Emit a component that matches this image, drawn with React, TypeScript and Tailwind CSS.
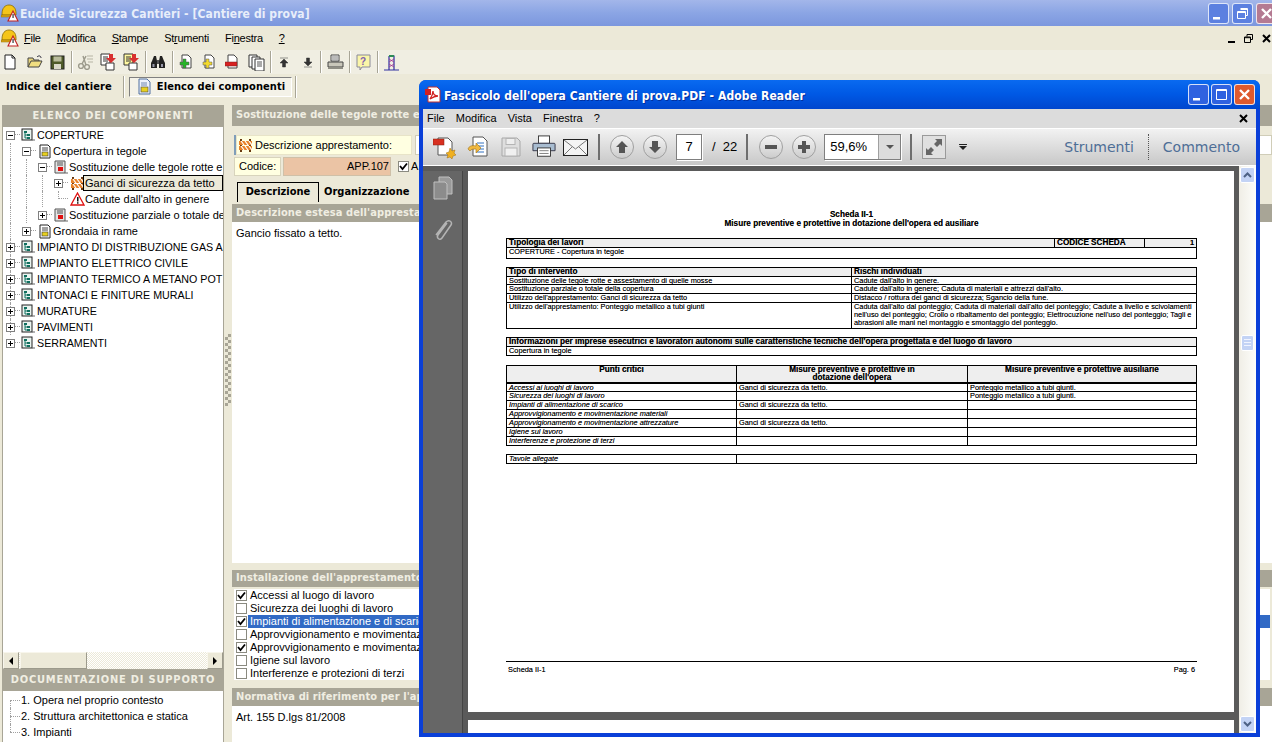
import React from 'react';

const UI = "font-['Liberation_Sans',Arial,sans-serif]";
const HEAD = "font-['DejaVu_Sans_Condensed','DejaVu_Sans',sans-serif]";

function Box({ w, h, children, className = '' }: { w: number; h: number; children: React.ReactNode; className?: string }) {
  return (
    <svg width={w} height={h} viewBox={`0 0 ${w} ${h}`} className={`block shrink-0 ${className}`}>
      {children}
    </svg>
  );
}

function HelmetIcon() {
  return (
    <Box w={18} h={18}>
      <path d="M1 10C1 4 4 1 8 1s7 3 7 8v2H1z" fill="#F5C518" stroke="#8A6A00" strokeWidth="0.8" />
      <path d="M0 11h10v2H0z" fill="#E0A810" stroke="#8A6A00" strokeWidth="0.5" />
      <path d="M12 7l5 10H7z" fill="#fff" stroke="#C02020" strokeWidth="1.100" />
      <rect x="11.500" y="10" width="1.100" height="4" fill="#222" />
    </Box>
  );
}

function DocIcon({ fill = '#fff', stroke = '#222' }: { fill?: string; stroke?: string }) {
  return (
    <Box w={16} h={18}>
      <path d="M3 2h7l3 3v11H3z" fill={fill} stroke={stroke} strokeWidth="1" />
      <path d="M10 2v3h3" fill="none" stroke={stroke} />
    </Box>
  );
}

function ListDocIcon() {
  return (
    <Box w={16} h={18}>
      <path d="M2 1h8l3 3v12H2z" fill="#EDF1FA" stroke="#5070A0" />
      <path d="M4 5h6M4 7h6" stroke="#7088B0" />
      <rect x="4" y="9" width="7" height="5" fill="#E8D020" stroke="#444" strokeWidth="0.6" />
    </Box>
  );
}

function OpenIcon() {
  return (
    <Box w={16} h={16}>
      <path d="M1 13V4h5l1 2h5v2" fill="#E6D47C" stroke="#444" />
      <path d="M1 13l3-6h11l-3 6z" fill="#F0DE80" stroke="#444" />
      <path d="M10 3c2-2 4-1 4 1" fill="none" stroke="#223" />
    </Box>
  );
}

function SaveIcon() {
  return (
    <Box w={15} h={15}>
      <rect x="1" y="1" width="13" height="13" fill="#4E5A28" stroke="#222" />
      <rect x="3.500" y="1.500" width="8" height="5" fill="#B9BC9C" />
      <rect x="4" y="9" width="7" height="5" fill="#D9D8C8" />
    </Box>
  );
}

function CutIcon() {
  return (
    <Box w={17} h={16}>
      <circle cx="4" cy="12" r="2.400" fill="none" stroke="#9C9A8C" strokeWidth="1.400" />
      <circle cx="10" cy="13" r="2.400" fill="none" stroke="#9C9A8C" strokeWidth="1.400" />
      <path d="M5 10l4-8M9 11L6 2" stroke="#9C9A8C" strokeWidth="1.400" />
      <path d="M10 2h6M10 5h6M11 8h5" stroke="#B5B3A4" strokeWidth="1.200" />
    </Box>
  );
}

function CopyDownIcon({ fill }: { fill: string }) {
  return (
    <Box w={17} h={18}>
      <path d="M1 1h9v11H1z" fill={fill} stroke="#333" />
      <path d="M3 4h5M3 6h5M3 8h5" stroke="#333" />
      <path d="M6 10h8v7H6z" fill="#fff" stroke="#333" />
      <path d="M9 1h4v4h3l-5 5-5-5h3z" fill="#D83030" />
    </Box>
  );
}

function BinocularsIcon() {
  return (
    <Box w={16} h={15}>
      <path d="M2 6l2-5h2l1 5v7H1V8zM14 6l-2-5h-2L9 6v7h6V8z" fill="#222" />
      <rect x="7" y="5" width="2" height="4" fill="#555" />
      <rect x="2.500" y="9" width="2" height="3" fill="#99A" />
      <rect x="11" y="9" width="2" height="3" fill="#99A" />
    </Box>
  );
}

function SheetActionIcon({ kind }: { kind: 'add' | 'edit' | 'del' }) {
  const color = kind === 'add' ? '#27B427' : kind === 'edit' ? '#F2D92E' : '#D82020';
  return (
    <Box w={14} h={16}>
      <path d="M3 1h6l3 3v10H3z" fill="#fff" stroke="#444" />
      {kind === 'del' ? (
        <rect x="0" y="8" width="12" height="4" fill={color} stroke="#722" strokeWidth="0.5" />
      ) : (
        <path d="M4 5h3v3h3v3H7v3H4v-3H1V8h3z" fill={color} stroke="#555" strokeWidth="0.5" />
      )}
    </Box>
  );
}

function PagesIcon() {
  return (
    <Box w={17} h={17}>
      <path d="M1 1h8v12H1z" fill="#fff" stroke="#333" />
      <path d="M4 3h8v12H4z" fill="#fff" stroke="#333" />
      <path d="M7 5h9v12H7z" fill="#fff" stroke="#333" />
      <path d="M9 8h5M9 10h5M9 12h5" stroke="#555" />
    </Box>
  );
}

function ArrowBarIcon({ down = false }: { down?: boolean }) {
  return (
    <Box w={10} h={11}>
      {down ? (
        <path d="M3.500 1h3v4h2.500L5 9 1 5h2.500zM1 10h8" fill="#333" stroke="#333" strokeWidth="0.5" />
      ) : (
        <path d="M1 1h8M5 2l4 4H6.500v4h-3V6H1z" fill="#333" stroke="#333" strokeWidth="0.5" />
      )}
    </Box>
  );
}

function PrintIcon() {
  return (
    <Box w={17} h={16}>
      <path d="M4 1h8v6H4z" fill="#fff" stroke="#444" />
      <path d="M5 3h6M5 5h6" stroke="#777" />
      <path d="M1 8h15v5H1z" fill="#C9C7BA" stroke="#444" />
      <rect x="1" y="13" width="15" height="2" fill="#8F8E84" />
    </Box>
  );
}

function HelpIcon() {
  return (
    <Box w={15} h={17}>
      <path d="M1 1h13v12H6l-2 3v-3H1z" fill="#FBF6A8" stroke="#8A8A9A" />
      <text x="4" y="11" fontSize="10" fontWeight="700" fontFamily="Liberation Sans" fill="#8060B0">?</text>
    </Box>
  );
}

function TowerIcon() {
  return (
    <Box w={15} h={17}>
      <path d="M5 2h5v14M5 2v14" stroke="#3030A0" strokeWidth="1.200" fill="none" />
      <path d="M5 5l5 3M10 5L5 8M5 10l5 3M10 10l-5 3" stroke="#A03090" strokeWidth="0.8" />
      <rect x="5" y="1" width="5" height="2" fill="#2E8B57" />
      <path d="M0 16h15" stroke="#3030A0" />
    </Box>
  );
}

function TreeRootIcon() {
  return (
    <Box w={16} h={14}>
      <rect x="1" y="1" width="10" height="11" fill="#EAF4F0" stroke="#222" />
      <path d="M3 3h3v2H3zM6 6h3v2H6zM6 9h3v2H6z" fill="#107060" />
      <path d="M4 5v5h2M4 7h2" stroke="#107060" fill="none" />
      <path d="M11 12l3 0" stroke="#666" />
    </Box>
  );
}

function TreeDocIcon() {
  return (
    <Box w={15} h={15}>
      <path d="M2 1h8l2 2v11H2z" fill="#fff" stroke="#222" />
      <path d="M4 4h6M4 6h6" stroke="#444" />
      <rect x="4" y="8" width="6" height="4" fill="#E8D020" stroke="#333" strokeWidth="0.6" />
    </Box>
  );
}

function TreeRedDocIcon() {
  return (
    <Box w={15} h={15}>
      <path d="M1 1h10v12H1z" fill="#E4E4E4" stroke="#555" />
      <path d="M3 3h6M3 5h6" stroke="#555" />
      <rect x="4" y="7" width="5" height="4" fill="#E01010" />
      <path d="M11 13h3" stroke="#666" />
    </Box>
  );
}

function BarrierIcon() {
  return (
    <svg width="13" height="13" viewBox="0 0 13 13" className="block shrink-0">
      <rect x="1" y="0" width="2" height="13" fill="#6B3A10" />
      <rect x="10" y="0" width="2" height="13" fill="#6B3A10" />
      <rect x="0" y="2" width="13" height="4" fill="#E8822A" />
      <rect x="0" y="7" width="13" height="4" fill="#E8822A" />
      <path d="M2 2l3 4M6 2l3 4M10 2l3 4M2 7l3 4M6 7l3 4M10 7l3 4" stroke="#fff" strokeWidth="1.200" />
    </svg>
  );
}

function WarnIcon() {
  return (
    <Box w={15} h={14}>
      <path d="M7.500 1L14 13H1z" fill="#fff" stroke="#E01010" strokeWidth="1.300" />
      <rect x="7" y="5" width="1.500" height="4.500" fill="#111" />
      <rect x="7" y="10.200" width="1.500" height="1.500" fill="#111" />
    </Box>
  );
}

function Expander({ sign }: { sign: '+' | '-' }) {
  return (
    <span className="relative z-10 -ml-[1px] flex h-[9px] w-[9px] items-center justify-center border border-[#808080] bg-white">
      <span className="h-px w-[5px] bg-black" />
      {sign === '+' && <span className="absolute h-[5px] w-px bg-black" />}
    </span>
  );
}

type TreeRow = {
  level: number;
  exp?: '+' | '-';
  icon: React.ReactNode;
  label: string;
  guides: number[];
  stub?: boolean;
  selected?: boolean;
};

const rows: TreeRow[] = [
  { level: 0, exp: '-', icon: <TreeRootIcon />, label: 'COPERTURE', guides: [] },
  { level: 1, exp: '-', icon: <TreeDocIcon />, label: 'Copertura in tegole', guides: [0] },
  { level: 2, exp: '-', icon: <TreeRedDocIcon />, label: 'Sostituzione delle tegole rotte e assestamento', guides: [0, 1] },
  { level: 3, exp: '+', icon: <BarrierIcon />, label: 'Ganci di sicurezza da tetto', guides: [0, 1, 2], selected: true },
  { level: 3, stub: true, icon: <WarnIcon />, label: "Cadute dall'alto in genere", guides: [0, 1, 2] },
  { level: 2, exp: '+', icon: <TreeRedDocIcon />, label: 'Sostituzione parziale o totale della copertura', guides: [0, 1] },
  { level: 1, exp: '+', icon: <TreeDocIcon />, label: 'Grondaia in rame', guides: [0] },
  { level: 0, exp: '+', icon: <TreeRootIcon />, label: 'IMPIANTO DI DISTRIBUZIONE GAS A', guides: [0] },
  { level: 0, exp: '+', icon: <TreeRootIcon />, label: 'IMPIANTO ELETTRICO CIVILE', guides: [0] },
  { level: 0, exp: '+', icon: <TreeRootIcon />, label: 'IMPIANTO TERMICO A METANO POT', guides: [0] },
  { level: 0, exp: '+', icon: <TreeRootIcon />, label: 'INTONACI E FINITURE MURALI', guides: [0] },
  { level: 0, exp: '+', icon: <TreeRootIcon />, label: 'MURATURE', guides: [0] },
  { level: 0, exp: '+', icon: <TreeRootIcon />, label: 'PAVIMENTI', guides: [0] },
  { level: 0, exp: '+', icon: <TreeRootIcon />, label: 'SERRAMENTI', guides: [] },
];

function Tree() {
  return (
    <div className="flex min-h-0 flex-1 flex-col overflow-hidden border-x border-[#A8A596] bg-white">
      {rows.map((r) => (
        <div key={r.label} className={`flex h-4 shrink-0 items-center overflow-hidden whitespace-nowrap text-black ${r.level === 0 ? 'text-[10.700px]' : 'text-[11px]'}`}>
          {Array.from({ length: r.level }).map((_, i) => (
            <span key={i} className="relative block h-4 w-4 shrink-0">
              {r.guides.includes(i) && <span className="absolute inset-y-0 left-[7px] border-l border-dotted border-[#A0A0A0]" />}
            </span>
          ))}
          <span className="relative flex h-4 w-4 shrink-0 items-center justify-center">
            <span className="absolute left-[8px] top-[7px] w-[9px] border-t border-dotted border-[#A0A0A0]" />
            {r.guides.includes(r.level) && <span className="absolute inset-y-0 left-[7px] border-l border-dotted border-[#A0A0A0]" />}
            {r.stub && <span className="absolute left-[7px] top-0 h-2 border-l border-dotted border-[#A0A0A0]" />}
            {r.exp && <Expander sign={r.exp} />}
          </span>
          <span className="ml-[2px] flex w-4 shrink-0 justify-center">{r.icon}</span>
          <span className={r.selected ? '-ml-[2px] flex h-4 flex-1 items-center border border-black bg-[#ECE9D8] pl-[1px]' : ''}>{r.label}</span>
        </div>
      ))}
    </div>
  );
}

function HBar() {
  return (
    <div className="flex h-[17px] shrink-0 border-x border-[#A8A596] bg-[repeating-conic-gradient(#ffffff_0_25%,#ECE9D8_0_50%)] bg-[length:2px_2px]">
      <div className="flex w-[16px] items-center justify-center border border-[#F8F6EC] border-b-[#9C9A8C] border-r-[#9C9A8C] bg-[#ECE9D8]">
        <span className="h-0 w-0 border-y-[4px] border-r-[4px] border-y-transparent border-r-black" />
      </div>
      <div className="ml-[1px] w-[67px] border border-[#F8F6EC] border-b-[#9C9A8C] border-r-[#9C9A8C] bg-[#ECE9D8]" />
      <div className="flex-1" />
      <div className="flex w-[16px] items-center justify-center border border-[#F8F6EC] border-b-[#9C9A8C] border-r-[#9C9A8C] bg-[#ECE9D8]">
        <span className="h-0 w-0 border-y-[4px] border-l-[4px] border-y-transparent border-l-black" />
      </div>
    </div>
  );
}

function PanelHead({ children, h, center = false }: { children: React.ReactNode; h: number; center?: boolean }) {
  return (
    <div
      style={{ height: h }}
      className={`flex shrink-0 items-center overflow-hidden whitespace-nowrap bg-[#A8A596] text-[11px] font-bold text-[#F0EEE2] ${HEAD} ${center ? 'justify-center tracking-[0.8px]' : 'pl-1 tracking-[0.1px]'}`}
    >
      {children}
    </div>
  );
}

const checks = [
  { label: 'Accessi al luogo di lavoro', on: true },
  { label: 'Sicurezza dei luoghi di lavoro', on: false },
  { label: 'Impianti di alimentazione e di scarico', on: true, sel: true },
  { label: 'Approvvigionamento e movimentazione materiali', on: false },
  { label: 'Approvvigionamento e movimentazione attrezzature', on: true },
  { label: 'Igiene sul lavoro', on: false },
  { label: 'Interferenze e protezioni di terzi', on: false },
];

function Check({ on }: { on: boolean }) {
  return (
    <span className="flex h-[11px] w-[11px] shrink-0 items-center justify-center border border-[#8A8A80] bg-white">
      {on && (
        <svg width="9" height="9" viewBox="0 0 9 9" className="block">
          <path d="M1 4l2.500 3L8 1.500" fill="none" stroke="#000" strokeWidth="1.800" />
        </svg>
      )}
    </span>
  );
}

function RightPanel() {
  return (
    <div className="flex min-w-0 flex-1 flex-col text-[11px] text-black">
      <PanelHead h={21}>Sostituzione delle tegole rotte e assestamento di quelle mosse</PanelHead>
      <div className="mt-[9px] flex h-[20px] shrink-0 gap-[3px] pl-[2px]">
        <div className="flex w-[178px] items-center gap-[3px] border-l-2 border-l-[#7F9DB9] bg-[#FFFFE1] pl-[3px] shadow-[inset_0_0_0_1px_#E8E4C8]">
          <BarrierIcon />
          <span>Descrizione apprestamento:</span>
        </div>
        <div className="flex-1 border border-[#D0CDB8] bg-white" />
      </div>
      <div className="mt-[1px] flex h-[20px] shrink-0 items-center pl-[2px]">
        <div className="flex h-[19px] w-[47px] items-center border border-[#D8D4BC] bg-[#FFFFE1] pl-1">Codice:</div>
        <div className="ml-[2px] flex h-[19px] w-[108px] items-center justify-end border border-[#CFC0A8] bg-[#EBC4A5] pr-[1px]">APP.107</div>
        <span className="ml-[7px] flex"><Check on /></span>
        <span className="ml-[2px]">A carico dell&apos;impresa</span>
      </div>
      <div className={`mt-[6px] flex h-[20px] shrink-0 items-end pl-[5px] text-[11px] font-bold ${HEAD}`}>
        <div className="flex h-[20px] w-[82px] items-center justify-center border border-b-0 border-black bg-[#ECE9D8]">Descrizione</div>
        <div className="flex h-[20px] items-center px-[5px]">Organizzazione</div>
      </div>
      <div className="h-[2px] shrink-0" />
      <PanelHead h={18}>Descrizione estesa dell&apos;apprestamento</PanelHead>
      <div className="min-h-0 flex-1 bg-white px-1 pt-[3px]">Gancio fissato a tetto.</div>
      <div className="h-[7px] shrink-0" />
      <PanelHead h={17}>Installazione dell&apos;apprestamento</PanelHead>
      <div className="shrink-0 border-2 border-[#ECE9D8] bg-white">
        {checks.map((c) => (
          <div key={c.label} className="flex h-[13px] items-center">
            <span className="flex w-[14px] justify-center"><Check on={c.on} /></span>
            <span className={`flex h-[13px] flex-1 items-center whitespace-nowrap pl-[2px] ${c.sel ? 'bg-[#316AC5] text-white' : ''}`}>{c.label}</span>
          </div>
        ))}
      </div>
      <div className="h-[6px] shrink-0" />
      <PanelHead h={18}>Normativa di riferimento per l&apos;apprestamento</PanelHead>
      <div className="h-[36px] shrink-0 bg-white px-1 pt-[3px]">Art. 155 D.lgs 81/2008</div>
    </div>
  );
}

function TitleBtn({ kind, faded = false }: { kind: 'min' | 'max' | 'restore' | 'close'; faded?: boolean }) {
  const bg = kind === 'close'
    ? faded ? 'bg-[#B47A92]' : 'bg-[#DE5A2E]'
    : faded ? 'bg-[#5C80E0]' : 'bg-[#2F62E0]';
  return (
    <span className={`flex h-[21px] w-[21px] shrink-0 items-center justify-center rounded-[3px] border border-white/80 ${bg}`}>
      <svg width="15" height="15" viewBox="0 0 15 15" fill="none" stroke="#fff" className="block">
        {kind === 'min' && <rect x="2" y="11" width="7" height="2.500" fill="#fff" stroke="none" />}
        {kind === 'max' && <path d="M2.500 2.500h10v10h-10zM2.500 3.500h10" />}
        {kind === 'restore' && <path d="M5.500 2.500h7v7h-2M5.500 3.500h7M2.500 5.500h8v7h-8zM2.500 6.500h8" />}
        {kind === 'close' && <path d="M3 3l9 9M12 3l-9 9" strokeWidth="2.400" />}
      </svg>
    </span>
  );
}

function Sep({ className = '' }: { className?: string }) {
  return <span className={`block h-[22px] w-[2px] shrink-0 border-l border-r border-l-[#A8A596] border-r-white ${className}`} />;
}

function Slot({ ml, children }: { ml: string; children: React.ReactNode }) {
  return <span className={`block shrink-0 ${ml}`}>{children}</span>;
}

function MainApp() {
  return (
    <div className="flex h-full flex-col">
      {/* title bar */}
      <div className="flex h-[26px] shrink-0 items-center bg-gradient-to-b from-[#A3B6EA] via-[#8BA5E4] to-[#7C97DE] pl-[1px] text-[#E8EEFA]">
        <HelmetIcon />
        <span className={`ml-[1px] mt-[1px] whitespace-nowrap text-[12px] font-bold tracking-[0.1px] ${HEAD}`}>Euclide Sicurezza Cantieri - [Cantiere di prova]</span>
        <span className="-mr-[5px] ml-auto flex gap-[3px]">
          <TitleBtn kind="min" faded />
          <TitleBtn kind="restore" faded />
          <TitleBtn kind="close" faded />
        </span>
      </div>
      {/* menu */}
      <div className="flex h-[24px] shrink-0 items-center pl-[1px] text-[11px] tracking-[-0.25px] text-black">
        <HelmetIcon />
        <span className="ml-[5px]"><u>F</u>ile</span>
        <span className="ml-[16px]"><u>M</u>odifica</span>
        <span className="ml-[16px]"><u>S</u>tampe</span>
        <span className="ml-[16px]">St<u>r</u>umenti</span>
        <span className="ml-[16px]">Fi<u>n</u>estra</span>
        <span className="ml-[16px]"><u>?</u></span>
        <span className="ml-auto flex items-center gap-[9px] pr-[1px]">
          <span className="mt-[7px] block h-[2px] w-[7px] bg-black" />
          <svg width="9" height="9" viewBox="0 0 9 9" fill="none" stroke="#000" className="block"><path d="M3 2.500V.5h5.500v5H6.500M.5 3h6v5.500h-6zM.5 3.700h6" /></svg>
          <svg width="9" height="9" viewBox="0 0 9 9" fill="none" stroke="#000" strokeWidth="2" className="block"><path d="M1 1l7 7M8 1L1 8" /></svg>
        </span>
      </div>
      {/* toolbar */}
      <div className="flex h-[24px] shrink-0 items-center bg-[#F0EEE2] pl-[2px]">
        <DocIcon />
        <Slot ml="ml-[9px]"><OpenIcon /></Slot>
        <Slot ml="ml-[7px]"><SaveIcon /></Slot>
        <Sep className="ml-[6px]" />
        <Slot ml="ml-[4px]"><CutIcon /></Slot>
        <Slot ml="ml-[6px]"><CopyDownIcon fill="#fff" /></Slot>
        <Slot ml="ml-[6px]"><CopyDownIcon fill="#FFF8A0" /></Slot>
        <Sep className="ml-[5px]" />
        <Slot ml="ml-[3px]"><BinocularsIcon /></Slot>
        <Sep className="ml-[6px]" />
        <Slot ml="ml-[5px]"><SheetActionIcon kind="add" /></Slot>
        <Slot ml="ml-[9px]"><SheetActionIcon kind="edit" /></Slot>
        <Slot ml="ml-[9px]"><SheetActionIcon kind="del" /></Slot>
        <Slot ml="ml-[9px]"><PagesIcon /></Slot>
        <Sep className="ml-[5px]" />
        <Slot ml="ml-[7px]"><ArrowBarIcon /></Slot>
        <Slot ml="ml-[14px]"><ArrowBarIcon down /></Slot>
        <Sep className="ml-[7px]" />
        <Slot ml="ml-[5px]"><PrintIcon /></Slot>
        <Sep className="ml-[5px]" />
        <Slot ml="ml-[5px]"><HelpIcon /></Slot>
        <Sep className="ml-[6px]" />
        <Slot ml="ml-[5px]"><TowerIcon /></Slot>
      </div>
      {/* tab strip */}
      <div className={`flex h-[26px] shrink-0 items-center pl-[6px] text-[11px] font-bold tracking-[0.1px] text-black ${HEAD}`}>
        <span className="mt-[1px] whitespace-nowrap">Indice del cantiere</span>
        <Sep className="ml-[11px]" />
        <div className="ml-[4px] flex h-[20px] w-[163px] items-center border border-white border-l-[#808080] border-t-[#808080] bg-[#F4F2E8] pl-[7px]">
          <ListDocIcon />
          <span className="ml-[4px] whitespace-nowrap">Elenco dei componenti</span>
        </div>
        <Sep className="ml-[3px]" />
      </div>
      {/* body */}
      <div className="flex min-h-0 flex-1 pl-[2px] pt-[5px]">
        <div className="flex w-[222px] shrink-0 flex-col">
          <PanelHead h={22} center>ELENCO DEI COMPONENTI</PanelHead>
          <Tree />
          <HBar />
          <PanelHead h={22} center>DOCUMENTAZIONE DI SUPPORTO</PanelHead>
          <div className="h-[51px] shrink-0 border-x border-[#A8A596] bg-white pl-[7px] pt-[1px] text-[11px] text-black">
            {['1. Opera nel proprio contesto', '2. Struttura architettonica e statica', '3. Impianti'].map((t, i) => (
              <div key={t} className="relative flex h-4 items-center whitespace-nowrap">
                <span className={`absolute left-0 border-l border-dotted border-[#A0A0A0] ${i === 0 ? 'top-2 bottom-0' : i === 1 ? 'inset-y-0' : 'top-0 h-2'}`} />
                <span className="mr-[1px] block w-[10px] border-t border-dotted border-[#A0A0A0]" />
                {t}
              </div>
            ))}
          </div>
        </div>
        {/* splitter */}
        <div className="w-[8px] shrink-0 pl-[1px] pt-[229px]">
          <div className="h-[72px] w-[6px] bg-[repeating-conic-gradient(#A8A596_0_25%,transparent_0_50%)] bg-[length:6px_6px]" />
        </div>
        <RightPanel />
      </div>
    </div>
  );
}

function Cell({ className = '', children }: { className?: string; children?: React.ReactNode }) {
  return <div className={`overflow-hidden whitespace-nowrap px-[2px] leading-[8px] ${className}`}>{children}</div>;
}

const riskRows = [
  ['Sostituzione delle tegole rotte e assestamento di quelle mosse', 'Cadute dall\'alto in genere.', 'h-[8px]'],
  ['Sostituzione parziale o totale della copertura', 'Cadute dall\'alto in genere; Caduta di materiali e attrezzi dall\'alto.', 'h-[9px]'],
  ['Utilizzo dell\'apprestamento: Ganci di sicurezza da tetto', 'Distacco / rottura dei ganci di sicurezza; Sgancio della fune.', 'h-[9px]'],
];

const pointRows = [
  ['Accessi ai luoghi di lavoro', 'Ganci di sicurezza da tetto.', 'Ponteggio metallico a tubi giunti.', 'h-[8px]'],
  ['Sicurezza dei luoghi di lavoro', '', 'Ponteggio metallico a tubi giunti.', 'h-[9px]'],
  ['Impianti di alimentazione di scarico', 'Ganci di sicurezza da tetto.', '', 'h-[9px]'],
  ['Approvvigionamento e movimentazione materiali', '', '', 'h-[9px]'],
  ['Approvvigionamento e movimentazione attrezzature', 'Ganci di sicurezza da tetto.', '', 'h-[9px]'],
  ['Igiene sul lavoro', '', '', 'h-[9px]'],
  ['Interferenze e protezione di terzi', '', '', 'h-[8px]'],
];

function PdfPage() {
  return (
    <div className="h-[541px] shrink-0 bg-white pl-[38px] pr-[37px] pt-[39px] text-[7.350px] text-black [text-shadow:0_0_0.6px_rgba(0,0,0,0.55)]">
      <div className="text-center text-[8.200px] font-bold leading-[9px]">Scheda II-1</div>
      <div className="text-center text-[8.200px] font-bold leading-[9px]">Misure preventive e protettive in dotazione dell&apos;opera ed ausiliare</div>

      <div className="mt-[10px] border border-black">
        <div className="flex h-[9px] border-b border-black bg-[#EEEEEE]">
          <Cell className="flex-1 text-[8.200px] font-bold">Tipologia dei lavori</Cell>
          <Cell className="w-[90px] border-l border-black text-[8.200px] font-bold">CODICE SCHEDA</Cell>
          <Cell className="w-[52px] border-l border-black text-right font-bold">1</Cell>
        </div>
        <Cell className="h-[10px]">COPERTURE - Copertura in tegole</Cell>
      </div>

      <div className="mt-[8px] border border-black">
        <div className="flex h-[9px] border-b border-black bg-[#EEEEEE] text-[8.200px] font-bold">
          <Cell className="w-[344px]">Tipo di intervento</Cell>
          <Cell className="flex-1 border-l border-black">Rischi individuati</Cell>
        </div>
        {riskRows.map(([a, b, h]) => (
          <div key={a} className={`flex border-b border-black ${h}`}>
            <Cell className="w-[344px]">{a}</Cell>
            <Cell className="flex-1 border-l border-black">{b}</Cell>
          </div>
        ))}
        <div className="flex h-[25px]">
          <Cell className="w-[344px]">Utilizzo dell&apos;apprestamento: Ponteggio metallico a tubi giunti</Cell>
          <Cell className="flex-1 border-l border-black leading-[8.500px]">
            Caduta dall&apos;alto dal ponteggio; Caduta di materiali dall&apos;alto del ponteggio; Cadute a livello e scivolamenti<br />
            nell&apos;uso del ponteggio; Crollo o ribaltamento del ponteggio; Elettrocuzione nell&apos;uso del ponteggio; Tagli e<br />
            abrasioni alle mani nel montaggio e smontaggio del ponteggio.
          </Cell>
        </div>
      </div>

      <div className="mt-[8px] border border-black">
        <Cell className="h-[9px] border-b border-black bg-[#EEEEEE] text-[8.200px] font-bold">
          Informazioni per imprese esecutrici e lavoratori autonomi sulle caratteristiche tecniche dell&apos;opera progettata e del luogo di lavoro
        </Cell>
        <Cell className="h-[8px]">Copertura in tegole</Cell>
      </div>

      <div className="mt-[9px] border border-black">
        <div className="flex h-[18px] border-b-2 border-black bg-[#EEEEEE] text-center text-[8.200px] font-bold">
          <Cell className="w-[229px]">Punti critici</Cell>
          <Cell className="w-[231px] border-l border-black leading-[8px]">Misure preventive e protettive in<br />dotazione dell&apos;opera</Cell>
          <Cell className="flex-1 border-l border-black">Misure preventive e protettive ausiliarie</Cell>
        </div>
        {pointRows.map(([a, b, c, h], i) => (
          <div key={a} className={`flex ${h} ${i < pointRows.length - 1 ? 'border-b border-black' : ''}`}>
            <Cell className="w-[229px] italic">{a}</Cell>
            <Cell className="w-[231px] border-l border-black">{b}</Cell>
            <Cell className="flex-1 border-l border-black">{c}</Cell>
          </div>
        ))}
      </div>

      <div className="mt-[8px] flex h-[10px] border border-black">
        <Cell className="w-[229px] italic">Tavole allegate</Cell>
        <Cell className="flex-1 border-l border-black" />
      </div>

      <div className="mt-[197px] flex justify-between border-t border-black px-[2px] pt-[2px]">
        <span>Scheda II-1</span>
        <span>Pag. 6</span>
      </div>
    </div>
  );
}

function CircleBtn({ d, className = '' }: { d: string; className?: string }) {
  return (
    <span className={`flex h-[24px] w-[24px] shrink-0 items-center justify-center rounded-full border border-[#A0A0A0] bg-gradient-to-b from-[#F4F4F4] to-[#CCCCCC] ${className}`}>
      <svg width="16" height="16" viewBox="0 0 16 16" className="block"><path d={d} fill="#555" /></svg>
    </span>
  );
}

function VSep({ className = '' }: { className?: string }) {
  return <span className={`block h-[26px] w-[2px] shrink-0 bg-[#6E6E6E] ${className}`} />;
}

function AdobeToolbar() {
  return (
    <div className="flex h-[38px] shrink-0 items-center border-y border-white bg-gradient-to-b from-[#F2F2F2] to-[#C8C8C8] pl-[10px] text-[13px] text-black">
      {/* create pdf */}
      <svg width="24" height="24" viewBox="0 0 24 24" className="block shrink-0">
        <path d="M5 3h10l4 4v13H5z" fill="#fff" stroke="#555" />
        <rect x="0" y="4" width="11" height="6" fill="#D83020" stroke="#802010" strokeWidth="0.5" />
        <path d="M17 13l2 3 3-1-1 3 2 2-3 1-1 3-2-2-3 1 1-3-2-2 3-1z" fill="#F0B020" stroke="#A07010" strokeWidth="0.5" />
      </svg>
      <svg width="24" height="24" viewBox="0 0 24 24" className="ml-[9px] block shrink-0">
        <path d="M7 2h10l4 4v15H7z" fill="#fff" stroke="#555" />
        <path d="M11 8h7M11 11h7M11 14h7M11 17h7" stroke="#3070C0" />
        <path d="M2 14c1-3 4-4 8-3V8l5 5-5 5v-4c-3 0-5 0-6 2z" fill="#F0B840" stroke="#A07010" strokeWidth="0.6" />
      </svg>
      <svg width="22" height="22" viewBox="0 0 22 22" className="ml-[10px] block shrink-0">
        <path d="M2 2h15l3 3v15H2z" fill="#DEDEDE" stroke="#A8A8A8" />
        <rect x="6" y="2.500" width="9" height="6" fill="#EEE" stroke="#B4B4B4" />
        <rect x="5" y="12" width="12" height="8" fill="#F0F0F0" stroke="#B4B4B4" />
      </svg>
      <svg width="24" height="24" viewBox="0 0 26 26" className="ml-[10px] block shrink-0">
        <rect x="7" y="1" width="12" height="8" fill="#fff" stroke="#333" />
        <path d="M2 9h22a1 1 0 011 1v7H1v-7a1 1 0 011-1z" fill="#A8BCD0" stroke="#334" />
        <rect x="6" y="14" width="14" height="9" fill="#fff" stroke="#333" />
        <path d="M8 17h10M8 20h10" stroke="#777" />
      </svg>
      <svg width="25" height="17" viewBox="0 0 25 17" className="ml-[7px] block shrink-0">
        <rect x="0.500" y="0.500" width="24" height="16" fill="#F4F4F4" stroke="#222" />
        <path d="M1 1l11.500 9L24 1M1 16l8-8M24 16l-8-8" fill="none" stroke="#777" />
      </svg>
      <VSep className="ml-[10px]" />
      <CircleBtn className="ml-[10px]" d="M8 2l6 6h-3v6H5V8H2z" />
      <CircleBtn className="ml-[9px]" d="M8 14l6-6h-3V2H5v6H2z" />
      <span className="ml-[9px] flex h-[26px] w-[26px] shrink-0 items-center justify-center border border-[#7F7F7F] bg-white shadow-[1px_1px_0_#fff]">7</span>
      <span className="ml-[10px] whitespace-nowrap">/&nbsp;&nbsp;22</span>
      <VSep className="ml-[9px]" />
      <CircleBtn className="ml-[11px]" d="M2 6h12v4H2z" />
      <CircleBtn className="ml-[9px]" d="M6 2h4v4h4v4h-4v4H6v-4H2V6h4z" />
      <div className="ml-[8px] flex h-[26px] w-[77px] shrink-0 border border-[#7F7F7F] bg-white shadow-[1px_1px_0_#fff]">
        <span className="flex flex-1 items-center pl-[5px]">59,6%</span>
        <span className="flex w-[22px] items-center justify-center border-l border-[#A0A0A0] bg-[#DCDCDC]">
          <span className="h-0 w-0 border-x-[4px] border-t-[4px] border-x-transparent border-t-[#555]" />
        </span>
      </div>
      <VSep className="ml-[9px]" />
      <span className="ml-[10px] flex h-[24px] w-[24px] shrink-0 items-center justify-center border border-[#9A9A9A] bg-[#E0E0E0]">
        <svg width="20" height="20" viewBox="0 0 20 20" fill="#666" className="block"><path d="M11 2h7v7l-2-2-3 3-3-3 3-3zM2 18v-7l2 2 3-3 3 3-3 3 2 2z" /></svg>
      </span>
      <span className="ml-[13px] flex flex-col items-center gap-[1px]">
        <span className="block h-[1px] w-[8px] bg-[#222]" />
        <span className="h-0 w-0 border-x-[4px] border-t-[4px] border-x-transparent border-t-[#222]" />
      </span>
      <span className="ml-auto flex items-center font-['DejaVu_Sans',sans-serif] text-[14px] text-[#4E6E96]">
        <span>Strumenti</span>
        <span className="mx-[14px] block h-[26px] border-l border-dotted border-[#555]" />
        <span className="mr-[16px]">Commento</span>
      </span>
    </div>
  );
}

function AdobeWindow() {
  return (
    <div className="absolute left-[419px] top-[80px] flex h-[657px] w-[841px] flex-col rounded-t-[7px] bg-[#0A3FD8] px-[4px] pb-[4px]">
      <div className="-mx-[4px] flex h-[29px] shrink-0 items-center rounded-t-[7px] bg-gradient-to-b from-[#0A6AF0] via-[#0058E4] to-[#0046CE] pl-[6px] pr-[5px] text-white">
        <svg width="16" height="17" viewBox="0 0 16 17" className="block shrink-0">
          <path d="M3 1h9l3 3v12H3z" fill="#fff" stroke="#C03030" />
          <rect x="0" y="3" width="6" height="6" fill="#D02020" />
          <path d="M5 13c2-3 3-6 3-8 0 3 2 5 5 5-3 0-5 1-8 3z" fill="none" stroke="#D02020" strokeWidth="1.300" />
        </svg>
        <span className={`ml-[3px] mt-[2px] whitespace-nowrap text-[12px] font-bold tracking-[0.1px] [text-shadow:1px_1px_0_#0030A0] ${HEAD}`}>Fascicolo dell&apos;opera Cantiere di prova.PDF - Adobe Reader</span>
        <span className="ml-auto flex gap-[2px]">
          <TitleBtn kind="min" />
          <TitleBtn kind="max" />
          <TitleBtn kind="close" />
        </span>
      </div>
      <div className="flex h-[19px] shrink-0 items-center gap-[11px] bg-[#DCDCDC] pl-[4px] text-[11px] text-black">
        <span>File</span>
        <span>Modifica</span>
        <span>Vista</span>
        <span>Finestra</span>
        <span>?</span>
        <svg width="9" height="9" viewBox="0 0 9 9" fill="none" stroke="#000" strokeWidth="2" className="ml-auto mr-[8px] block"><path d="M1 1l7 7M8 1L1 8" /></svg>
      </div>
      <AdobeToolbar />
      <div className="flex min-h-0 flex-1 flex-col bg-[#5A5A5A] pt-[5px]">
        <div className="flex min-h-0 flex-1">
          {/* nav pane */}
          <div className="flex w-[40px] shrink-0 flex-col items-center gap-[17px] border-r border-[#444] bg-[#666666] pt-[5px]">
            <svg width="20" height="24" viewBox="0 0 20 24" className="block">
              <path d="M6 1h10l3 3v14H6z" fill="#9A9A9A" stroke="#C0C0C0" />
              <path d="M1 6h11l2 2v15H1z" fill="#8C8C8C" stroke="#C0C0C0" />
            </svg>
            <svg width="20" height="26" viewBox="0 0 20 26" fill="none" stroke="#B4B4B4" strokeWidth="1.500" className="block">
              <path d="M14 6L5 18c-2 3 2 6 4 3l9-13c2-3-2-6-5-3L3 18" />
            </svg>
          </div>
          <div className="w-[5px] shrink-0" />
          <div className="flex w-[766px] shrink-0 flex-col">
            <PdfPage />
            <div className="h-[8px] shrink-0" />
            <div className="flex-1 bg-white" />
          </div>
          <div className="w-[5px] shrink-0" />
          {/* scrollbar */}
          <div className="-mt-[5px] flex w-[17px] shrink-0 flex-col items-center bg-gradient-to-r from-[#F0EEE6] to-[#FDFDFA] py-[1px]">
            <span className="flex h-[16px] w-[15px] items-center justify-center rounded-[2px] border border-white bg-[#C3D3F5]">
              <svg width="9" height="6" viewBox="0 0 9 6" fill="none" stroke="#4D6185" strokeWidth="2" className="block"><path d="M1 5l3.500-3.500L8 5" /></svg>
            </span>
            <span className="mt-[152px] flex h-[16px] w-[13px] items-center justify-center rounded-[2px] border border-white bg-[#C3D3F5]">
              <svg width="7" height="8" viewBox="0 0 7 8" stroke="#F0F4FF" className="block"><path d="M0 .5h7M0 3.500h7M0 6.500h7" /></svg>
            </span>
            <span className="mt-auto flex h-[16px] w-[15px] items-center justify-center rounded-[2px] border border-white bg-[#C3D3F5]">
              <svg width="9" height="6" viewBox="0 0 9 6" fill="none" stroke="#4D6185" strokeWidth="2" className="block"><path d="M1 1l3.500 3.500L8 1" /></svg>
            </span>
          </div>
        </div>
      </div>
    </div>
  );
}

export default function App() {
  return (
    <div className={`relative h-[742px] w-[1272px] overflow-hidden bg-[#ECE9D8] ${UI}`}>
      <MainApp />
      <AdobeWindow />
    </div>
  );
}
